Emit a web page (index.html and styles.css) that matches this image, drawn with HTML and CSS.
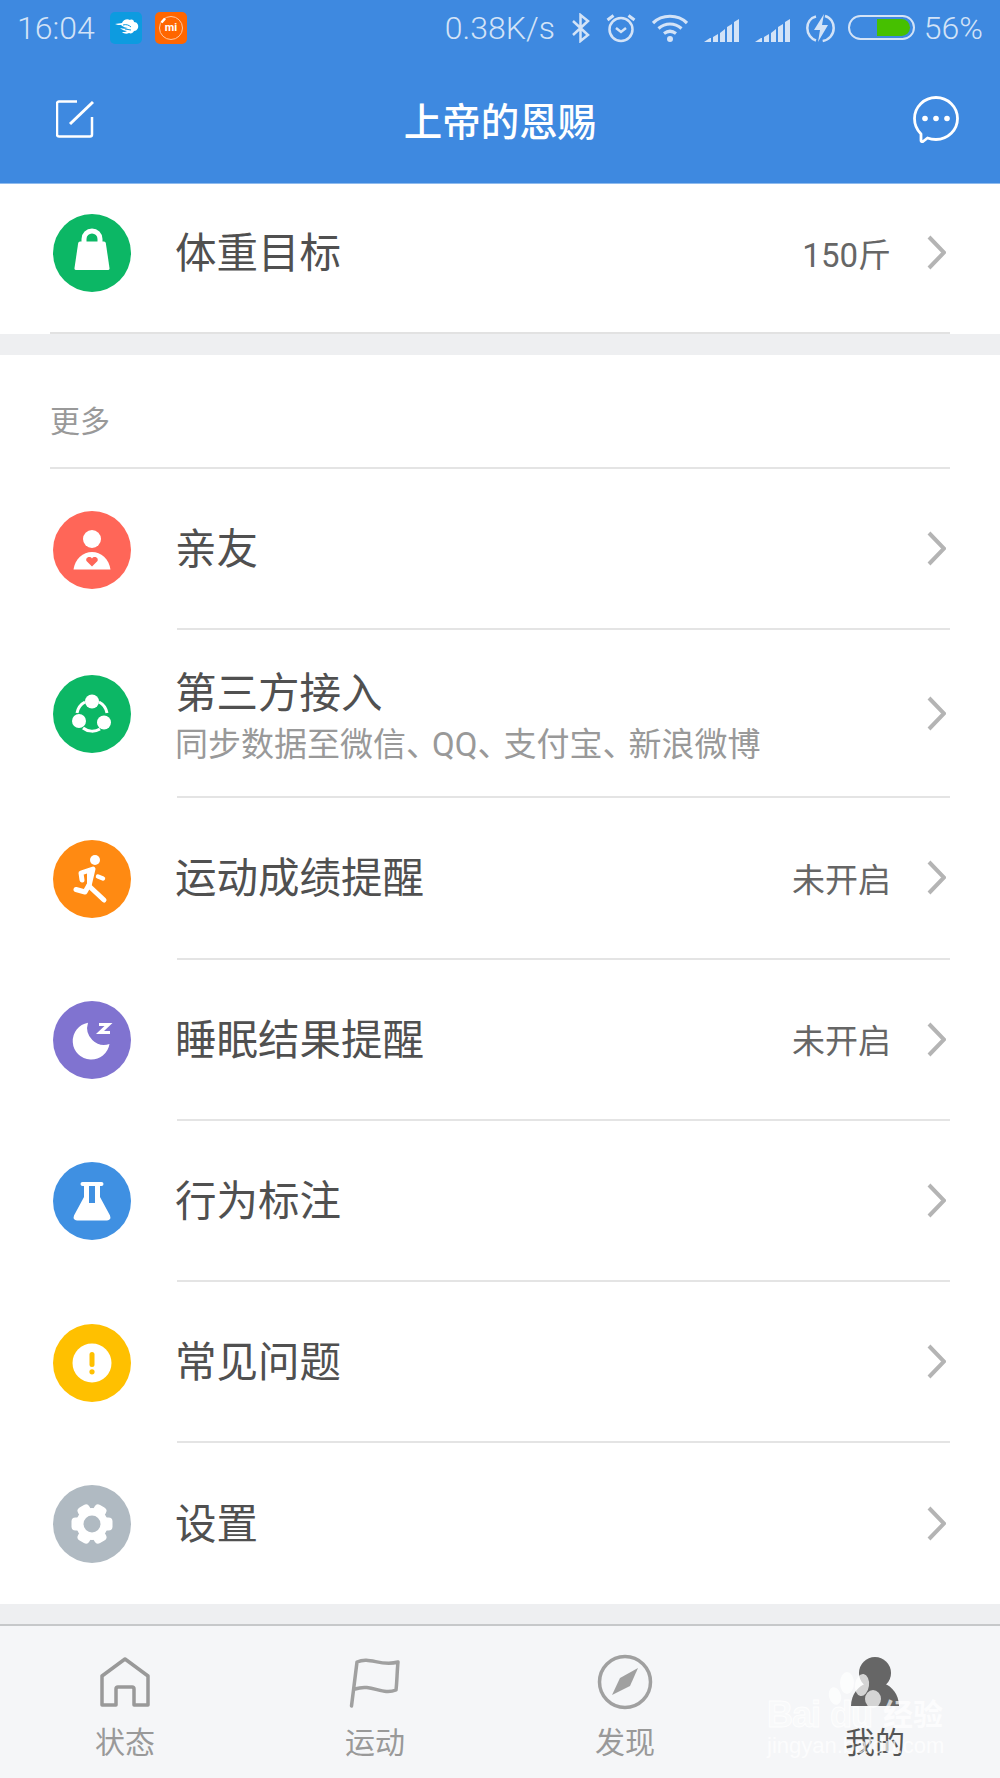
FILE: index.html
```html
<!DOCTYPE html>
<html lang="zh-CN">
<head>
    <meta charset="UTF-8"/>
    <title>上帝的恩赐</title>
    <link rel="stylesheet" href="styles.css">
</head>
<body>
<div class="page">
    <header class="header">
        <div class="status-bar">
            <span class="clock">16:04</span>
            <svg class="app-icon" width="32" height="32" viewBox="0 0 32 32">
                <rect width="32" height="32" rx="5" fill="#0d9be0"/>
                <path d="M12 11c1-3 5-5 8-3 2-1 4 0 4 2 3 0 5 3 4 6-1 2-2 3-4 3-1 2-3 3-5 2-2 1-5 1-7-1 2 0 4 0 5-1-2 0-5-1-7-3 3 1 6 1 8 0-2 0-5-1-7-3-2 0-4 0-6-1 2 0 5-1 7-1z" fill="#fff"/>
                <path d="M13 13c3-1 6 0 8 2M15 17c2 0 4 1 6 1" fill="none" stroke="#0d9be0" stroke-width="1"/>
            </svg>
            <svg class="app-icon app-icon-mi" width="32" height="32" viewBox="0 0 32 32">
                <rect width="32" height="32" rx="5" fill="#ff6600"/>
                <circle cx="16" cy="16" r="11.5" fill="none" stroke="#ffc9a3" stroke-width="1"/>
                <path d="M6.500 10.500L10 6.500" stroke="#fff" stroke-width="2.500"/>
                <text x="16" y="19" class="mi-text">mi</text>
            </svg>
            <div class="status-right">
                <span class="net-speed">0.38K/s</span>
                <svg width="19" height="30" viewBox="0 0 19 30" fill="none" stroke="#d3e3f7" stroke-width="2.500">
                    <path d="M2 8l15 14-7.500 6V2L17 8 2 22"/>
                </svg>
                <svg width="30" height="30" viewBox="0 0 30 30" fill="none" stroke="#d3e3f7" stroke-width="2.500">
                    <circle cx="15" cy="16.500" r="11.500"/>
                    <path d="M10 15l5 4 5-4"/>
                    <path d="M1.500 7l6-4.500M28.500 7l-6-4.500" stroke-width="3"/>
                </svg>
                <svg width="36" height="30" viewBox="0 0 36 30" fill="none" stroke="#d3e3f7" stroke-width="3.200">
                    <path d="M1 10C10 1 26 1 35 10"/>
                    <path d="M6.500 15.500c7-6 16-6 23 0"/>
                    <path d="M12 20.500c4-3 8-3 12 0"/>
                    <circle cx="18" cy="26" r="3" fill="#d3e3f7" stroke="none"/>
                </svg>
                <svg width="35" height="30" viewBox="0 0 35 30" fill="#d3e3f7">
                    <path d="M0 29l6-4h1v4zM9 24l5-3v8H9zM16 20l5-4v13h-5zM23 14l5-3v18h-5zM30 9l5-3v23h-5z"/>
                </svg>
                <svg width="35" height="30" viewBox="0 0 35 30" fill="#d3e3f7">
                    <path d="M0 29l6-4h1v4zM9 24l5-3v8H9zM16 20l5-4v13h-5zM23 14l5-3v18h-5zM30 9l5-3v23h-5z"/>
                </svg>
                <svg width="29" height="30" viewBox="0 0 29 30" fill="none" stroke="#d3e3f7" stroke-width="2.500">
                    <path d="M10 3.500C4 5 1.300 10 1.300 15c0 6 4 11 8.700 12.500M19 3c6 1.500 8.700 7 8.700 12 0 7-5 12-11 13"/>
                    <path d="M18 1L8 17h6l-2 12 10-17h-6z" fill="#d3e3f7" stroke="none"/>
                </svg>
                <div class="battery"><div class="battery-level"></div></div>
                <span class="battery-text">56%</span>
            </div>
        </div>
        <div class="toolbar">
            <svg class="tool-left" width="38" height="38" viewBox="0 0 38 38" fill="none" stroke="#fff" stroke-width="2.500" stroke-linejoin="round">
                <path d="M21 1.500H3a2 2 0 0 0-2 2v31a2 2 0 0 0 2 2h31a2 2 0 0 0 2-2V17"/>
                <path d="M14 24L37 2" stroke-width="3"/>
            </svg>
            <h1 class="title">上帝的恩赐</h1>
            <svg class="tool-right" width="46" height="47" viewBox="0 0 46 47" fill="none" stroke="#fff" stroke-width="2.800" stroke-linejoin="round">
                <path d="M23 1.500c12 0 21.500 9.500 21.500 21s-9.500 21-21.500 21c-3 0-6-.500-8.500-1.500L10 45.500c-1 .500-2 0-2-1v-6.500C4 34 1.500 28.500 1.500 22.500 1.500 11 11 1.500 23 1.500z"/>
                <g fill="#fff" stroke="none">
                    <circle cx="12" cy="22.500" r="2.800"/>
                    <circle cx="23" cy="22.500" r="2.800"/>
                    <circle cx="34" cy="22.500" r="2.800"/>
                </g>
            </svg>
        </div>
    </header>

    <main class="content">
        <section class="card card-top">
            <div class="row row-top">
                <svg class="row-icon" width="78" height="78" viewBox="0 0 78 78">
                    <circle cx="39" cy="39" r="39" fill="#0cb765"/>
                    <path d="M31 29v-4a8 8 0 0 1 16 0v4" fill="none" stroke="#fff" stroke-width="5"/>
                    <path d="M27 27.500h24q1.500 0 1.800 1.500l3.700 25q.200 2-1.500 2H23q-1.700 0-1.500-2l3.700-25q.300-1.500 1.800-1.500z" fill="#fff"/>
                </svg>
                <div class="row-body no-line">
                    <div class="row-text"><div class="row-title">体重目标</div></div>
                    <span class="row-value">150斤</span>
                    <svg class="chevron" width="19" height="35" viewBox="0 0 19 35"><path d="M2 2l15 15.500L2 33"/></svg>
                </div>
            </div>
        </section>

        <section class="card card-more">
            <div class="section-label">更多</div>

            <div class="row">
                <svg class="row-icon" width="78" height="78" viewBox="0 0 78 78">
                    <circle cx="39" cy="39" r="39" fill="#ff6658"/>
                    <circle cx="39" cy="28" r="9" fill="#fff"/>
                    <path d="M20.500 58.500C22 48 30 41 39 41s17 7 18.500 17.500z" fill="#fff"/>
                    <path d="M39 55.500l-5.500-5.500c-1.500-3.500 3.500-5.500 5.500-2.500 2-3 7-1 5.500 2.500z" fill="#ff6658"/>
                </svg>
                <div class="row-body">
                    <div class="row-text"><div class="row-title">亲友</div></div>
                    <svg class="chevron" width="19" height="35" viewBox="0 0 19 35"><path d="M2 2l15 15.500L2 33"/></svg>
                </div>
            </div>

            <div class="row row-tall">
                <svg class="row-icon" width="78" height="78" viewBox="0 0 78 78">
                    <circle cx="39" cy="39" r="39" fill="#0cb765"/>
                    <g fill="none" stroke="#fff" stroke-width="3">
                        <path d="M24 38c1-5 4-9 8-11"/>
                        <path d="M46 27c4 2 7 6 8 11"/>
                        <path d="M30 53c5 4 12 4 17 1"/>
                    </g>
                    <circle cx="39" cy="26.500" r="7" fill="#fff"/>
                    <circle cx="26" cy="46" r="7" fill="#fff"/>
                    <circle cx="51" cy="47.500" r="7" fill="#fff"/>
                </svg>
                <div class="row-body">
                    <div class="row-text">
                        <div class="row-title">第三方接入</div>
                        <div class="row-sub">同步数据至微信<span class="dun">、</span>QQ<span class="dun">、</span>支付宝<span class="dun">、</span>新浪微博</div>
                    </div>
                    <svg class="chevron" width="19" height="35" viewBox="0 0 19 35"><path d="M2 2l15 15.500L2 33"/></svg>
                </div>
            </div>

            <div class="row">
                <svg class="row-icon" width="78" height="78" viewBox="0 0 78 78">
                    <circle cx="39" cy="39" r="39" fill="#ff8a12"/>
                    <circle cx="42" cy="20" r="5" fill="#fff"/>
                    <g fill="none" stroke="#fff" stroke-width="4.500" stroke-linecap="round" stroke-linejoin="round">
                        <path d="M29 40l-1-7 12-4-4 17 15 14" stroke-width="5"/>
                        <path d="M36 45l-4 7-9-2.500" stroke-width="5"/>
                        <path d="M45 36.500l5 2"/>
                    </g>
                    <path d="M34 32h7l-3 13h-4z" fill="#fff"/>
                </svg>
                <div class="row-body">
                    <div class="row-text"><div class="row-title">运动成绩提醒</div></div>
                    <span class="row-value">未开启</span>
                    <svg class="chevron" width="19" height="35" viewBox="0 0 19 35"><path d="M2 2l15 15.500L2 33"/></svg>
                </div>
            </div>

            <div class="row">
                <svg class="row-icon" width="78" height="78" viewBox="0 0 78 78">
                    <circle cx="39" cy="39" r="39" fill="#8073d0"/>
                    <path d="M35 21.800A18.500 18.500 0 1 0 56.500 43 17 17 0 0 1 35 21.800z" fill="#fff"/>
                    <path d="M46 23.500h9.500l-8.500 8h10" fill="none" stroke="#fff" stroke-width="3.200"/>
                </svg>
                <div class="row-body">
                    <div class="row-text"><div class="row-title">睡眠结果提醒</div></div>
                    <span class="row-value">未开启</span>
                    <svg class="chevron" width="19" height="35" viewBox="0 0 19 35"><path d="M2 2l15 15.500L2 33"/></svg>
                </div>
            </div>

            <div class="row">
                <svg class="row-icon" width="78" height="78" viewBox="0 0 78 78">
                    <circle cx="39" cy="39" r="39" fill="#3f90e2"/>
                    <path fill="#fff" fill-rule="evenodd" d="M29.500 20h19a2 2 0 0 1 0 4H47v11l10 18.500q1.500 4.500-3 5H24q-4.500-.500-3-5L31 35V24h-1.500a2 2 0 0 1 0-4zM36 24v17h6V24z"/>
                </svg>
                <div class="row-body">
                    <div class="row-text"><div class="row-title">行为标注</div></div>
                    <svg class="chevron" width="19" height="35" viewBox="0 0 19 35"><path d="M2 2l15 15.500L2 33"/></svg>
                </div>
            </div>

            <div class="row">
                <svg class="row-icon" width="78" height="78" viewBox="0 0 78 78">
                    <circle cx="39" cy="39" r="39" fill="#ffc000"/>
                    <circle cx="39" cy="39" r="19.500" fill="#fff"/>
                    <rect x="36.500" y="28" width="5" height="15" rx="2.500" fill="#ffc000"/>
                    <circle cx="39" cy="47.800" r="2.600" fill="#ffc000"/>
                </svg>
                <div class="row-body">
                    <div class="row-text"><div class="row-title">常见问题</div></div>
                    <svg class="chevron" width="19" height="35" viewBox="0 0 19 35"><path d="M2 2l15 15.500L2 33"/></svg>
                </div>
            </div>

            <div class="row">
                <svg class="row-icon" width="78" height="78" viewBox="0 0 78 78">
                    <circle cx="39" cy="39" r="39" fill="#b0bac2"/>
                    <g fill="#fff">
                        <circle cx="39" cy="39" r="16"/>
                        <rect x="18.500" y="32.500" width="41" height="13" rx="4"/>
                        <rect x="18.500" y="32.500" width="41" height="13" rx="4" transform="rotate(60 39 39)"/>
                        <rect x="18.500" y="32.500" width="41" height="13" rx="4" transform="rotate(120 39 39)"/>
                    </g>
                    <circle cx="39" cy="39" r="8.500" fill="#b0bac2"/>
                </svg>
                <div class="row-body no-line">
                    <div class="row-text"><div class="row-title">设置</div></div>
                    <svg class="chevron" width="19" height="35" viewBox="0 0 19 35"><path d="M2 2l15 15.500L2 33"/></svg>
                </div>
            </div>
        </section>
    </main>

    <nav class="tabbar">
        <div class="tab">
            <svg width="52" height="52" viewBox="0 0 52 52" fill="none" stroke="#999" stroke-width="3.500" stroke-linejoin="round">
                <path d="M3 20L26 3l23 17v29H35V33q0-2-2-2H19q-2 0-2 2v16H3z"/>
            </svg>
            <span class="tab-label">状态</span>
        </div>
        <div class="tab">
            <svg width="52" height="52" viewBox="0 0 52 52" fill="none" stroke="#a0a0a0" stroke-width="3.500" stroke-linecap="round" stroke-linejoin="round">
                <path d="M2.500 50L8 6C21 0 31 11 49 6c-1 10-1 20-2 28-14 6-24-7-41-1"/>
            </svg>
            <span class="tab-label">运动</span>
        </div>
        <div class="tab">
            <svg width="56" height="56" viewBox="0 0 56 56" class="tab-compass">
                <circle cx="28" cy="28" r="25.500" fill="none" stroke="#a0a0a0" stroke-width="3.500"/>
                <path d="M41 14L33 32 15 41 23 24z" fill="#a0a0a0"/>
            </svg>
            <span class="tab-label">发现</span>
        </div>
        <div class="tab tab-active">
            <svg width="52" height="52" viewBox="0 0 52 52" fill="#666">
                <circle cx="26" cy="17" r="16"/>
                <path d="M2 50c0-12 8-20 14-22h20c6 2 14 10 14 22z"/>
            </svg>
            <span class="tab-label">我的</span>
        </div>

        <div class="watermark">
            <svg class="paw" width="70" height="56" viewBox="0 0 70 56">
                <ellipse cx="8" cy="24" rx="6" ry="9" transform="rotate(-15 8 24)"/>
                <ellipse cx="20" cy="11" rx="7" ry="11"/>
                <ellipse cx="35" cy="13" rx="7" ry="11" transform="rotate(8 35 13)"/>
                <ellipse cx="46" cy="27" rx="8" ry="9"/>
            </svg>
            <div class="wm-line">
                <span class="wm-bai">Bai</span>
                <span class="wm-du">du</span>
                <span class="wm-cn">经验</span>
            </div>
            <div class="wm-url">jingyan.baidu.com</div>
        </div>
    </nav>
</div>
</body>
</html>
```
FILE: styles.css
```css
* {
    box-sizing: border-box;
}

body {
    margin: 0;
    font-family: Roboto, "Noto Sans CJK SC", sans-serif;
}

.page {
    display: flex;
    flex-direction: column;
    width: 1000px;
    height: 1778px;
    overflow: hidden;
    background-color: #eeeff1;
}

/* 顶部蓝色区域 */
.header {
    height: 184px;
    background-color: #3e89e0;
    border-bottom: 1px solid #8fbbee;
}

.status-bar {
    display: flex;
    align-items: center;
    height: 55px;
    padding: 0 17px 0 17px;
    color: #d3e3f7;
}

.clock {
    width: 93px;
    font-size: 32px;
    font-weight: 300;
}

.app-icon-mi {
    margin-left: 13px;
}

.mi-text {
    font-size: 11px;
    font-weight: 700;
    fill: #fff;
    text-anchor: middle;
}

.status-right {
    display: flex;
    align-items: center;
    gap: 16px;
    margin-left: auto;
}

.net-speed,
.battery-text {
    font-size: 32px;
    font-weight: 300;
}

.battery {
    display: flex;
    justify-content: flex-end;
    width: 67px;
    height: 25px;
    margin: 0 -7px 0 -3px;
    padding: 2px 3px;
    border: 2px solid #d3e3f7;
    border-radius: 13px;
}

.battery-level {
    width: 33px;
    background-color: #46c000;
    border-radius: 0 9px 9px 0;
}

.toolbar {
    display: grid;
    grid-template-columns: 1fr auto 1fr;
    align-items: center;
    height: 128px;
    padding: 0 41px;
}

.tool-left {
    margin-left: 15px;
}

.tool-right {
    justify-self: end;
}

.title {
    margin: 0;
    font-size: 38.5px;
    font-weight: 500;
    color: #fff;
}

/* 列表 */
.content {
    flex: 1;
}

.card {
    padding: 0 50px;
    background-color: #fff;
}

.card-top {
    height: 150px;
    margin-bottom: 21px;
}

.card-more {
    height: 1249px;
}

.section-label {
    height: 114px;
    padding-top: 47px;
    font-size: 30px;
    line-height: 40px;
    color: #999;
    border-bottom: 2px solid #e4e4e4;
}

.row {
    display: flex;
    align-items: center;
    height: 161.25px;
    padding-left: 3px;
}

.row-top {
    height: 150px;
    padding-bottom: 11px;
    border-bottom: 2px solid #e2e2e2;
}

.row-tall {
    height: 168px;
}

.row-icon {
    flex-shrink: 0;
    margin-right: 46px;
}

.row-body {
    display: flex;
    flex: 1;
    align-items: center;
    align-self: stretch;
    padding-right: 4px;
    border-bottom: 2px solid #e4e4e4;
}

.no-line {
    border-bottom: none;
}

.row-text {
    flex: 1;
    margin-left: -2px;
    padding-top: 3px;
}

.row-tall .row-text {
    padding-top: 7px;
}

.row-title {
    font-size: 41.5px;
    line-height: 52px;
    color: #505050;
}

.row-sub {
    margin-top: 4px;
    font-size: 33px;
    line-height: 42px;
    color: #999;
}

.dun {
    letter-spacing: -7px;
}

.row-value {
    margin-right: 36px;
    font-size: 33px;
    color: #666;
}

.chevron {
    fill: none;
    stroke: #b4b4b4;
    stroke-width: 4;
}

/* 底部标签栏 */
.tabbar {
    position: relative;
    display: flex;
    height: 154px;
    background-color: #f5f6f8;
    border-top: 2px solid #c6c8ca;
}

.tab {
    display: flex;
    flex-direction: column;
    align-items: center;
    width: 250px;
    padding-top: 30px;
}

.tab svg {
    display: block;
}

.tab-compass {
    margin: -2px 0 -2px;
}

.tab-label {
    margin-top: 17px;
    font-size: 30px;
    line-height: 36px;
    color: #999;
}

.tab-active .tab-label {
    color: #555;
}

/* 右下角水印 */
.watermark {
    position: absolute;
    top: 46px;
    left: 767px;
    width: 180px;
    color: rgba(255, 255, 255, 0.72);
}

.paw {
    position: absolute;
    top: 0;
    left: 60px;
    fill: rgba(255, 255, 255, 0.72);
}

.wm-line {
    display: flex;
    align-items: center;
    height: 62px;
    padding-top: 24px;
}

.wm-bai,
.wm-du {
    font-family: "Liberation Sans", sans-serif;
    font-size: 36px;
    font-weight: 700;
    line-height: 38px;
    letter-spacing: -1px;
    color: rgba(255, 255, 255, 0.35);
    -webkit-text-stroke: 1px rgba(255, 255, 255, 0.85);
}

.wm-du {
    margin-left: 10px;
}

.wm-cn {
    margin-left: 11px;
    font-size: 30px;
    font-weight: 700;
    line-height: 36px;
}

.wm-url {
    font-family: "Liberation Sans", sans-serif;
    font-size: 22px;
    line-height: 24px;
    white-space: nowrap;
}
```
